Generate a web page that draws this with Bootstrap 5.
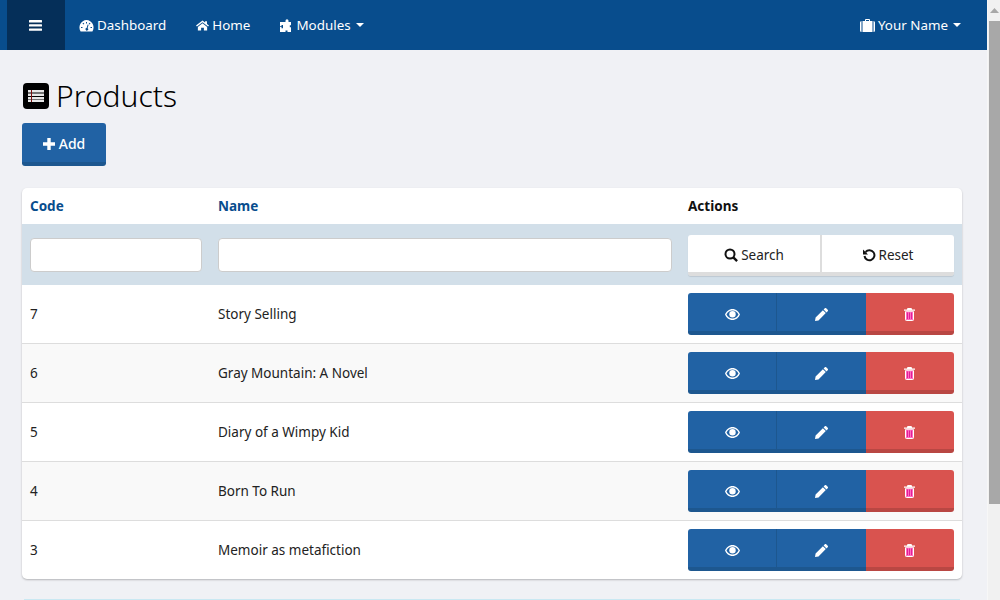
<!DOCTYPE html>
<html lang="en">
<head>
    <meta charset="UTF-8">
    <meta name="viewport" content="width=device-width, initial-scale=1">
    <title>Products</title>
    <link href="https://cdn.jsdelivr.net/npm/bootstrap@5.3.0/dist/css/bootstrap.min.css" rel="stylesheet">
    <style>
        body { background: #f0f1f5; font-family: "Noto Sans", "Open Sans", sans-serif; font-size: 13.5px; color: #222; overflow: hidden; }
        .screen { height: 100vh; }
        .main-col { min-width: 0; }
        .scroll-rail { width: 13px; background: #f1f1f1; padding-left: 1px; border-left: 1px solid #f7f7f7; }
        .scroll-arrow { height: 17px; }
        .scroll-thumb { height: 483px; background: #a8a8a8; }
        .top-bar { background: #084d8d; height: 50px; }
        .burger { background: #052f59; width: 58px; margin-left: 7px; padding-right: 2px; }
        .top-link { color: #fff; text-decoration: none; font-size: 13.4px; padding: 0 15px; display: flex; align-items: center; gap: 3px; }
        .top-link.first-link { padding-left: 14px; }
        .top-link.user-link { margin-right: 11px; }
        .top-link svg { fill: #fff; }
        .caret-down { border-top: 4px solid #fff; border-left: 4px solid transparent; border-right: 4px solid transparent; margin-left: 2px; }
        .page-wrap { padding: 0 25px 0 22px; }
        .page-title { font-size: 30px; font-weight: 300; color: #000; margin: 27px 0 8px 1px; height: 38px; line-height: 38px; gap: 7px; }
        .title-icon { width: 26px; height: 26px; flex: none; }
        .btn-add { background: #2162a4; color: #fff; border: 0; border-bottom: 4px solid #1d578f; border-radius: 3px; width: 84px; height: 43px; font-size: 14px; font-weight: 500; padding: 2px 0 0; }
        .data-panel { background: #fff; border-radius: 5px; box-shadow: 0 1px 2px rgba(0,0,0,.25); margin-top: 22px; overflow: hidden; }
        .data-row { display: grid; grid-template-columns: 188px 470px 1fr; border-bottom: 1px solid #ddd; height: 59px; align-items: center; padding-left: 8px; padding-right: 8px; }
        .data-row:last-child { border-bottom: 0; height: 58px; }
        .data-row.head-row { height: 36px; border-bottom: 0; font-weight: 700; font-size: 13.5px; color: #111; padding-top: 1px; }
        .head-row a { color: #084d8d; text-decoration: none; }
        .data-row.filter-row { height: 61px; background: #d2dfe9; border-bottom: 0; }
        .data-row.even-row { background: #f9f9f9; }
        .filter-box { height: 34px; width: 172px; border: 1px solid #ccc; border-radius: 4px; background: #fff; display: block; }
        .filter-box.wide-box { width: 454px; }
        .action-group { display: flex; width: 266px; }
        .action-btn { flex: 1; height: 42px; border: 0; border-bottom: 4px solid; color: #fff; display: flex; align-items: center; justify-content: center; gap: 3px; padding: 4px 0 0; font-size: 13.5px; }
        .action-btn:first-child { border-radius: 3px 0 0 3px; }
        .action-btn:last-child { border-radius: 0 3px 3px 0; }
        .act-blue { background: #2162a4; border-color: #1d578f; }
        .act-blue + .act-blue { border-left: 1px solid #1d578f; }
        .act-red { background: #d9534f; border-color: #b94743; }
        .filter-row .action-group { margin-top: 2px; border-radius: 3px; box-shadow: 0 1px 1px rgba(0,0,0,.1); }
        .action-btn.act-white { background: #fff; border-color: #ddd; color: #222; height: 41px; padding-top: 3px; }
        .act-white + .act-white { border-left: 2px solid #ddd; }
        .next-panel { height: 1px; background: #c9e8f2; margin: 20px 2px 0; }
    </style>
</head>
<body>
    <div class="screen d-flex">
        <div class="main-col flex-grow-1">
            <nav class="top-bar d-flex">
                <a class="burger d-flex align-items-center justify-content-center" href="#">
                    <svg width="13" height="11" viewBox="0 0 13 11" fill="#fff"><rect width="13" height="2.4" rx=".5"/><rect y="4.2" width="13" height="2.4" rx=".5"/><rect y="8.4" width="13" height="2.4" rx=".5"/></svg>
                </a>
                <a class="top-link first-link" href="#">
                    <svg width="15" height="13" viewBox="0 0 15 13"><path fill-rule="evenodd" d="M7.5 1A7.5 7.500 0 0 0 1.600 12.500h11.800A7.500 7.500 0 0 0 7.500 1zM7 3h1v1.500H7zM3.500 4.500l.8-.7 1 1-.8.7zM11.500 4.500l-.8-.7-1 1 .8.7zM2 8h1.500v1H2zM11.500 8H13v1h-1.500zM8.700 5.500l.9.300-1 3.400a1.300 1.300 0 1 1-1-.2z"/></svg>
                    Dashboard
                </a>
                <a class="top-link" href="#">
                    <svg width="13" height="11" viewBox="0 0 14 11"><path d="M7 0 0 5.600l1 1.100L7 1.900l6 4.800 1-1.100-2.200-1.800V.8H9.800v1.500zM2 7.200V11h3.500V8h3v3H12V7.200L7 3.100z"/></svg>
                    Home
                </a>
                <a class="top-link" href="#">
                    <svg width="13" height="13" viewBox="0 0 13 13"><path d="M3 3h2.500V1.800a1.500 1.500 0 0 1 3 0V3H11v3.200H9.800v2h1.200V13H7.500v-1.500h-2V13H0V8h1.500v1.200H3V6H1.500v1.200H0V3z"/></svg>
                    Modules <span class="caret-down"></span>
                </a>
                <a class="top-link user-link ms-auto" href="#">
                    <svg width="15" height="13" viewBox="0 0 15 13"><path fill-rule="evenodd" d="M5 2V1a1 1 0 0 1 1-1h3a1 1 0 0 1 1 1v1h2.500v11h-10V2zM6 2h3V1H6zM0 3.500A1.500 1.500 0 0 1 1.500 2V13A1.500 1.500 0 0 1 0 11.500zM13.500 2A1.500 1.500 0 0 1 15 3.500v8a1.500 1.500 0 0 1-1.500 1.500z"/></svg>
                    Your Name <span class="caret-down"></span>
                </a>
            </nav>

            <div class="page-wrap">
                <h1 class="page-title d-flex align-items-center">
                    <svg class="title-icon" viewBox="0 0 26 26"><rect width="26" height="26" rx="4" fill="#000"/><path fill="#e8e8e8" d="M5 7h16v2.500H5zM5 10.500h16V13H5zM5 14h16v2.500H5zM5 17h16v2H5z"/><path fill="#7a1010" d="M8 7h1v12H8z"/></svg>
                    Products
                </h1>
                <button class="btn-add d-flex align-items-center justify-content-center gap-1" type="button">
                    <svg width="12" height="12" viewBox="0 0 12 12" fill="#fff"><path d="M4.300 0h3.400v4.300H12v3.400H7.700V12H4.300V7.700H0V4.300h4.300z"/></svg>
                    Add
                </button>

                <div class="data-panel">
                    <div class="data-row head-row">
                        <a href="#">Code</a>
                        <a href="#">Name</a>
                        <span>Actions</span>
                    </div>
                    <div class="data-row filter-row">
                        <input class="filter-box" type="text" aria-label="Code">
                        <input class="filter-box wide-box" type="text" aria-label="Name">
                        <div class="action-group">
                            <button class="action-btn act-white" type="button">
                                <svg width="14" height="14" viewBox="0 0 14 14" fill="none" stroke="#111" stroke-width="2"><circle cx="6" cy="6" r="4.500"/><path d="m9.300 9.300 3.800 3.800" stroke-width="2.400"/></svg>
                                Search
                            </button>
                            <button class="action-btn act-white" type="button">
                                <svg width="13" height="13" viewBox="0 0 13 13" fill="none" stroke="#111" stroke-width="2"><path d="M2.600 3A5 5 0 1 1 1.500 7"/><path fill="#111" stroke="none" d="M0 .5v5h5z"/></svg>
                                Reset
                            </button>
                        </div>
                    </div>
                    <div class="data-row">
                        <span>7</span><span>Story Selling</span>
                        <div class="action-group row-actions"></div>
                    </div>
                    <div class="data-row even-row">
                        <span>6</span><span>Gray Mountain: A Novel</span>
                        <div class="action-group row-actions"></div>
                    </div>
                    <div class="data-row">
                        <span>5</span><span>Diary of a Wimpy Kid</span>
                        <div class="action-group row-actions"></div>
                    </div>
                    <div class="data-row even-row">
                        <span>4</span><span>Born To Run</span>
                        <div class="action-group row-actions"></div>
                    </div>
                    <div class="data-row">
                        <span>3</span><span>Memoir as metafiction</span>
                        <div class="action-group row-actions"></div>
                    </div>
                </div>
                <div class="next-panel"></div>
            </div>
        </div>
        <aside class="scroll-rail flex-shrink-0">
            <div class="scroll-arrow d-flex justify-content-center pt-1 mt-1">
                <svg width="9" height="5" viewBox="0 0 9 5" fill="#a8a8a8"><path d="M4.500 0 9 5H0z"/></svg>
            </div>
            <div class="scroll-thumb"></div>
        </aside>
    </div>

    <script>
        // same three buttons on every row
        var eye = '<svg width="15" height="11" viewBox="0 0 15 11"><path fill="#fff" fill-rule="evenodd" d="M7.500 0C11 0 13.800 2.500 15 5.500 13.800 8.500 11 11 7.500 11S1.200 8.500 0 5.500C1.200 2.500 4 0 7.500 0zM7.500 1.500C5 1.500 2.800 3 1.500 5.500 2.800 8 5 9.500 7.500 9.500S12.200 8 13.500 5.500C12.200 3 10 1.500 7.500 1.500z"/><circle cx="7.500" cy="5.200" r="3.200" fill="#fff"/></svg>';
        var pencil = '<svg width="13" height="13" viewBox="0 0 13 13"><path fill="#fff" d="M9.800.3a1 1 0 0 1 1.400 0l1.500 1.500a1 1 0 0 1 0 1.400l-1.200 1.200-2.900-2.900zM7.900 2.200l2.900 2.900L3.500 12.400 0 13l.6-3.500z"/></svg>';
        var trash = '<svg width="11" height="13" viewBox="0 0 11 13"><path fill="#fff" d="M3.500 0h4l.6 1.500H11v1.200H0V1.500h2.900zM4.300 1h2.400l-.2.500H4.500z"/><rect x="1.500" y="3.200" width="8" height="9.300" rx=".8" fill="#ff6ec0" stroke="#fff"/><path fill="#e0209a" d="M3 4.500h1v6.500H3zM5 4.500h1v6.500H5zM7 4.500h1v6.500H7z"/></svg>';
        document.querySelectorAll(".row-actions").forEach(function (group) {
            group.innerHTML =
                '<button class="action-btn act-blue" type="button" aria-label="View">' + eye + '</button>' +
                '<button class="action-btn act-blue" type="button" aria-label="Edit">' + pencil + '</button>' +
                '<button class="action-btn act-red" type="button" aria-label="Delete">' + trash + '</button>';
        });
    </script>
    <script src="https://cdn.jsdelivr.net/npm/bootstrap@5.3.0/dist/js/bootstrap.bundle.min.js"></script>
</body>
</html>
